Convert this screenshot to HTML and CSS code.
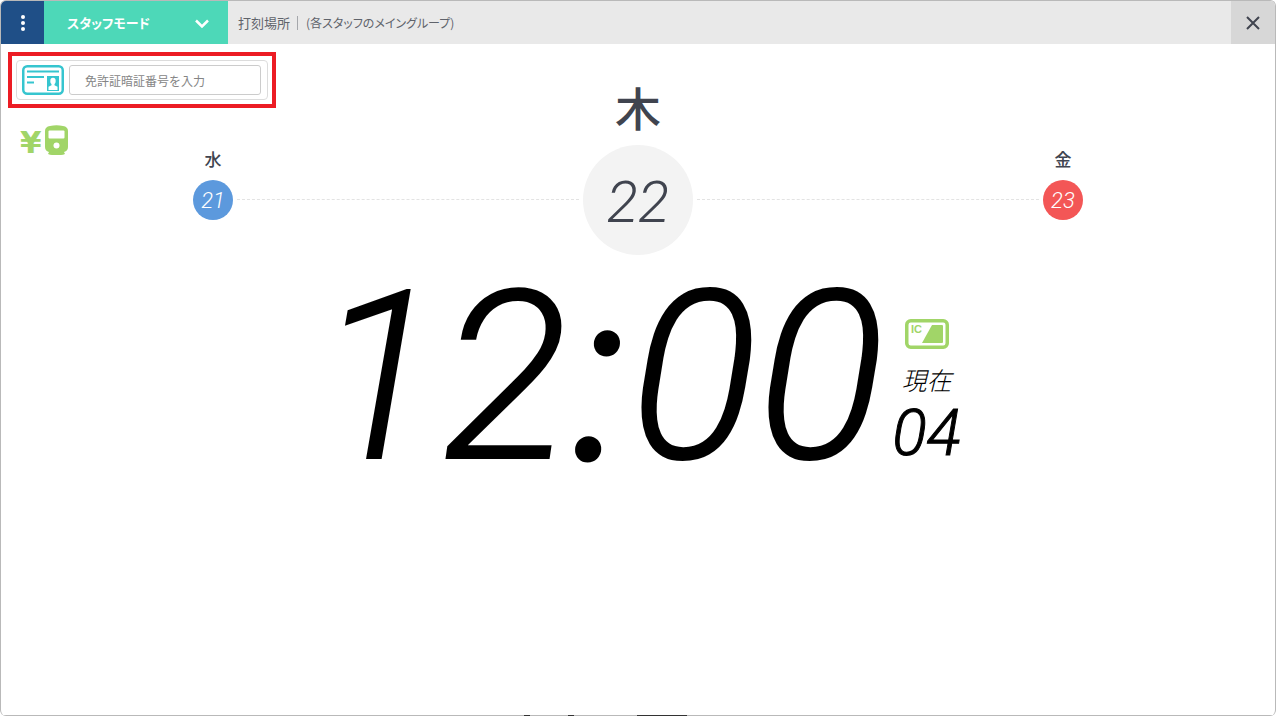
FILE: index.html
```html
<!DOCTYPE html>
<html lang="ja">
<head>
    <meta charset="UTF-8">
    <meta name="viewport" content="width=device-width, initial-scale=1.0">
    <title>スタッフモード</title>
    <link rel="stylesheet" href="styles.css">
</head>
<body>
    <div class="window">
        <header class="topbar">
            <button type="button" class="menu-button" aria-label="メニュー">
                <svg width="6" height="18" viewBox="0 0 6 18" fill="#fff">
                    <circle cx="3" cy="3" r="2"/>
                    <circle cx="3" cy="9" r="2"/>
                    <circle cx="3" cy="15" r="2"/>
                </svg>
            </button>
            <div class="mode">
                <select class="mode-select" aria-label="モード">
                    <option>スタッフモード</option>
                </select>
                <svg class="mode-arrow" width="14" height="10" viewBox="0 0 14 10">
                    <path d="M1 1.500l6 6 6-6" fill="none" stroke="#fff" stroke-width="2.500"/>
                </svg>
            </div>
            <p class="place"><span class="place-label">打刻場所</span><span class="place-name">(各スタッフのメイングループ)</span></p>
            <button type="button" class="close-button" aria-label="閉じる">
                <svg width="14" height="14" viewBox="0 0 14 14">
                    <path d="M1 1l12 12M13 1L1 13" stroke="#40444f" stroke-width="2"/>
                </svg>
            </button>
        </header>

        <main class="content">
            <aside class="tools">
                <form class="license">
                    <label class="license-label" for="license" aria-label="免許証暗証番号">
                        <svg width="42" height="30" viewBox="0 0 42 30">
                            <rect x="1.250" y="1.250" width="39.500" height="27.500" rx="4" fill="#fff" stroke="#36c5cf" stroke-width="2.500"/>
                            <path d="M5 6.500h32M5 12h17M5 17.500h7" stroke="#36c5cf" stroke-width="2.200"/>
                            <rect x="25" y="11" width="12" height="15" fill="#36c5cf"/>
                            <ellipse cx="31" cy="16" rx="2.700" ry="3.200" fill="#fff"/>
                            <path d="M29.500 18h3v2.200l3 1.600v3.200h-9v-3.200l3-1.600z" fill="#fff"/>
                        </svg>
                    </label>
                    <input type="text" id="license" class="license-input" placeholder="免許証暗証番号を入力">
                </form>
                <div class="fare">
                    <span class="yen">¥</span>
                    <svg width="23" height="30" viewBox="0 0 23 30">
                        <path d="M5 1Q11.500-.5 18 1q5 .8 5 5v16q0 4-4 5l1 2q-2 1-4 1H7q-2 0-4-1l1-2q-4-1-4-5V6q0-4.200 5-5z" fill="#a1d568"/>
                        <rect x="3.500" y="5.500" width="16" height="8" rx="1" fill="#fff"/>
                        <circle cx="11.500" cy="20.500" r="3" fill="#fff"/>
                    </svg>
                </div>
            </aside>

            <div class="board">
                <section class="calendar">
                    <div class="day">
                        <span class="weekday">水</span>
                        <span class="date date-blue">21</span>
                    </div>
                    <span class="line"></span>
                    <div class="day day-today">
                        <span class="weekday">木</span>
                        <span class="date">22</span>
                    </div>
                    <span class="line"></span>
                    <div class="day">
                        <span class="weekday">金</span>
                        <span class="date date-red">23</span>
                    </div>
                </section>

                <section class="clock">
                    <div class="time"><span>12</span><span class="colon">:</span><span>00</span></div>
                    <div class="now">
                        <svg width="44" height="30" viewBox="0 0 44 30">
                            <rect x="1.750" y="1.750" width="40.500" height="26.500" rx="4" fill="#fff" stroke="#a1d568" stroke-width="3.500"/>
                            <path d="M27 6h10q1 0 1 1v16q0 1-1 1H17z" fill="#a1d568"/>
                            <text class="ic" x="6" y="14">IC</text>
                        </svg>
                        <span class="now-label">現在</span>
                        <span class="seconds">04</span>
                    </div>
                </section>
            </div>
        </main>
        <div class="edge"></div>
    </div>
</body>
</html>
```
FILE: styles.css
```css
* {
    box-sizing: border-box;
}

body {
    margin: 0;
    background: #fff;
    color: #40444f;
    font-family: "Noto Sans CJK JP", sans-serif;
    font-feature-settings: "palt";
}

.window {
    display: flex;
    flex-direction: column;
    min-height: 100vh;
    border: 1px solid #b9b9b9;
    border-bottom: none;
    border-radius: 6px;
    overflow: hidden;
}

/* header */
.topbar {
    display: flex;
    height: 43px;
    background: #e9e9e9;
}

.menu-button,
.close-button {
    display: flex;
    align-items: center;
    justify-content: center;
    width: 44px;
    padding: 0;
    border: none;
    cursor: pointer;
}

.menu-button {
    width: 43px;
    background: #1f4f87;
}

.close-button {
    margin-left: auto;
    background: #d7d7d7;
}

.mode {
    position: relative;
    width: 184px;
}

.mode-select {
    appearance: none;
    width: 100%;
    height: 100%;
    padding: 0 40px 0 23px;
    border: none;
    border-radius: 0;
    background: #4dd8b8;
    color: #fff;
    font-family: inherit;
    font-feature-settings: inherit;
    font-size: 13px;
    font-weight: bold;
}

.mode-arrow {
    position: absolute;
    top: 18px;
    right: 19px;
    pointer-events: none;
}

.place {
    display: flex;
    align-items: center;
    margin: 0 0 0 10px;
    color: #5f636b;
    font-size: 13px;
    line-height: 14px;
}

.place-label {
    margin-right: 8px;
    padding-right: 7px;
    border-right: 1px solid #a5a7ab;
}

.place-name {
    font-size: 12px;
}

/* content */
.content {
    display: grid;
    flex: 1;
}

.tools,
.board {
    grid-area: 1 / 1;
}

.tools {
    z-index: 1;
    justify-self: start;
    align-self: start;
    padding: 8px 7px;
}

.license {
    display: flex;
    align-items: center;
    gap: 5px;
    position: relative;
    width: 268px;
    padding: 9px 11px 9px 10px;
    border: 4px solid #ec1c24;
}

.license::before {
    content: "";
    position: absolute;
    inset: 4px;
    border: 1px solid #dcdcdc;
    border-radius: 4px;
    pointer-events: none;
}

.license-label {
    display: flex;
}

.license-input {
    flex: 1;
    min-width: 0;
    height: 30px;
    padding: 0 15px;
    border: 1px solid #ccc;
    border-radius: 3px;
    font-family: inherit;
    font-size: 12px;
}

.license-input::placeholder {
    color: #858585;
}

.fare {
    display: flex;
    align-items: center;
    gap: 3px;
    margin: 17px 0 0 12px;
}

.yen {
    width: 22px;
    padding-top: 4px;
    color: #a1d568;
    font-family: "DejaVu Sans", sans-serif;
    font-size: 31px;
    font-weight: bold;
    line-height: 26px;
}

/* calendar */
.calendar {
    display: flex;
    align-items: flex-end;
    width: 70%;
    margin: 0 auto;
    padding: 32px 1px 0;
}

.day {
    display: flex;
    flex-direction: column;
    align-items: center;
    padding-bottom: 35px;
}

.weekday {
    margin-bottom: 9px;
    font-size: 17px;
    font-weight: 500;
    line-height: 24px;
}

.date {
    display: flex;
    align-items: center;
    justify-content: center;
    width: 40px;
    height: 40px;
    border-radius: 50%;
    background: #f3f3f3;
    font-family: Roboto, sans-serif;
    font-size: 22px;
    font-style: italic;
    font-weight: 300;
}

.date-blue {
    background: #5c99dd;
    color: #fff;
}

.date-red {
    background: #f35656;
    color: #fff;
}

.day-today {
    padding-bottom: 0;
}

.day-today .weekday {
    font-size: 46px;
    line-height: 60px;
}

.day-today .date {
    width: 110px;
    height: 110px;
    padding-top: 4px;
    font-size: 58px;
}

.line {
    flex: 1;
    margin: 0 4px 55px;
    border-top: 1px dashed #e3e3e3;
}

/* clock */
.clock {
    display: flex;
    justify-content: center;
    padding-top: 21px;
    color: #000;
    font-family: Roboto, sans-serif;
    font-style: italic;
    font-weight: 300;
}

.time {
    display: flex;
    font-size: 236px;
    line-height: 204px;
    -webkit-text-stroke: 2px #000;
}

.colon {
    margin: 0 6px;
    -webkit-text-stroke: 7px #000;
}

.now {
    display: flex;
    flex-direction: column;
    align-items: center;
    padding: 43px 0 0 8px;
}

.ic {
    fill: #a1d568;
    font-family: "Liberation Sans", sans-serif;
    font-size: 11px;
    font-style: normal;
    font-weight: bold;
}

.now-label {
    margin-top: 12px;
    font-family: "Noto Sans CJK JP", sans-serif;
    font-size: 25px;
    line-height: 36px;
}

.seconds {
    font-size: 64px;
    line-height: 74px;
    -webkit-text-stroke: 1px #000;
}

/* dark marks along the bottom edge */
.edge {
    height: 1px;
    background:
        linear-gradient(#333, #333) 523px 0 / 6px 1px no-repeat,
        linear-gradient(#333, #333) 567px 0 / 6px 1px no-repeat,
        linear-gradient(#333, #333) 636px 0 / 50px 1px no-repeat,
        #b9b9b9;
}
```
